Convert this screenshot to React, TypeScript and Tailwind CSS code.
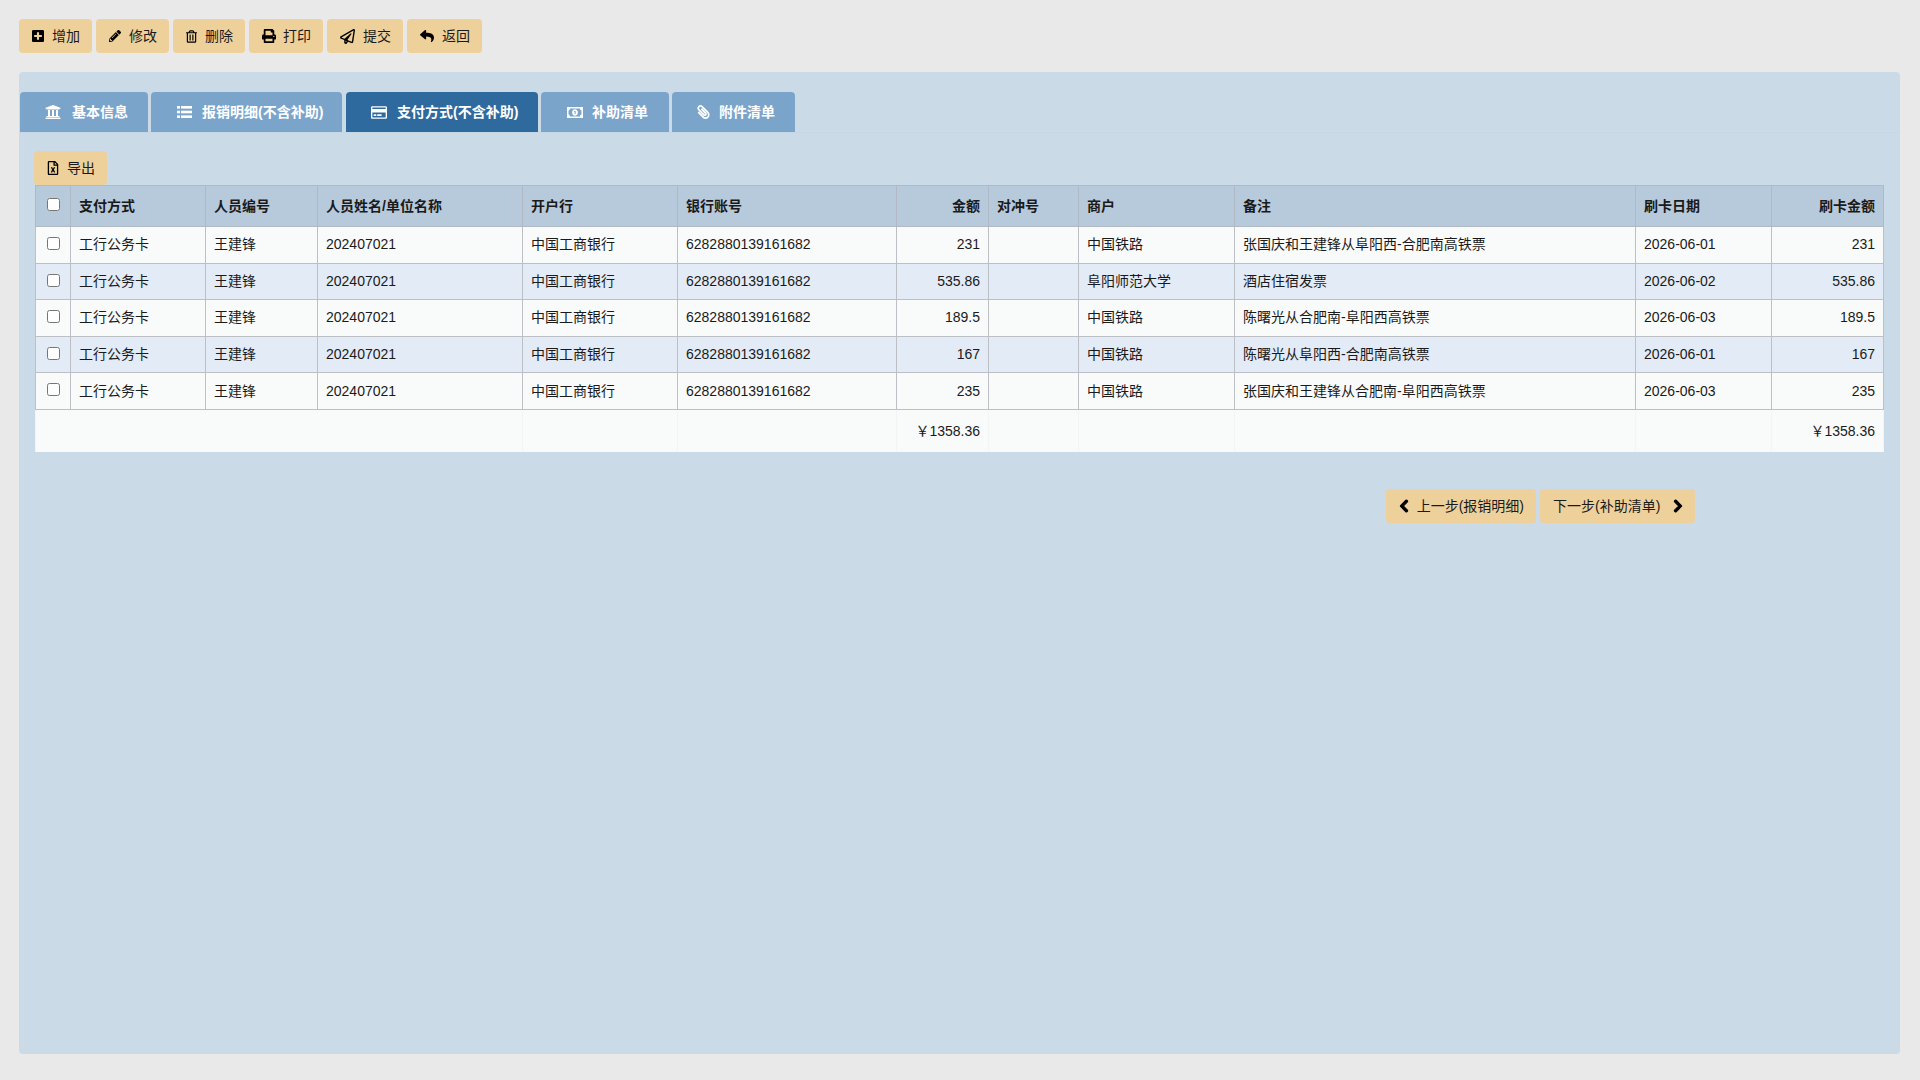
import type { ReactNode } from 'react';
import {
  FaChevronLeft,
  FaChevronRight,
  FaPaperclip,
  FaPencilAlt,
  FaPlusSquare,
  FaPrint,
  FaRegCreditCard,
  FaRegFileExcel,
  FaRegPaperPlane,
  FaRegTrashAlt,
  FaReply,
  FaUniversity,
} from 'react-icons/fa';

const rows = [
  { amount: '231', merchant: '中国铁路', note: '张国庆和王建锋从阜阳西-合肥南高铁票', date: '2026-06-01' },
  { amount: '535.86', merchant: '阜阳师范大学', note: '酒店住宿发票', date: '2026-06-02' },
  { amount: '189.5', merchant: '中国铁路', note: '陈曙光从合肥南-阜阳西高铁票', date: '2026-06-03' },
  { amount: '167', merchant: '中国铁路', note: '陈曙光从阜阳西-合肥南高铁票', date: '2026-06-01' },
  { amount: '235', merchant: '中国铁路', note: '张国庆和王建锋从合肥南-阜阳西高铁票', date: '2026-06-03' },
];

const colWidths = [
  'w-[35px]',
  'w-[135px]',
  'w-[112px]',
  'w-[205px]',
  'w-[155px]',
  'w-[219px]',
  'w-[92px]',
  'w-[90px]',
  'w-[156px]',
  'w-[401px]',
  'w-[136px]',
  'w-[112px]',
];

function ActionButton({ children, className = '' }: { children: ReactNode; className?: string }) {
  return (
    <button className={`flex h-[34px] items-center rounded-[4px] bg-[#eed09b] pl-[13px] pr-3 text-[14px] text-[#1a1a1a] ${className}`}>
      {children}
    </button>
  );
}

function Tab({ icon, label, active, className }: { icon: ReactNode; label: string; active?: boolean; className: string }) {
  return (
    <div
      className={`flex h-[40px] items-center rounded-t-[4px] text-[14px] font-bold text-white ${className} ${
        active ? 'bg-[#2f6a9e]' : 'bg-[#7ba4cb]'
      }`}
    >
      {icon}
      <span>{label}</span>
    </div>
  );
}

function ListIcon() {
  return (
    <svg viewBox="0 0 15 12" className="mr-[10px] h-[12px] w-[15px]" fill="currentColor">
      <rect x="0" y="0" width="3" height="2.6" />
      <rect x="4" y="0" width="11" height="2.6" />
      <rect x="0" y="4.7" width="3" height="2.6" />
      <rect x="4" y="4.7" width="11" height="2.6" />
      <rect x="0" y="9.4" width="3" height="2.6" />
      <rect x="4" y="9.4" width="11" height="2.6" />
    </svg>
  );
}

function MoneyIcon() {
  return (
    <svg viewBox="0 0 16 11" className="mr-[9px] h-[11px] w-[16px]" fill="currentColor" fillRule="evenodd">
      <path d="M0 0h16v11H0zM3 1.5C3 2.8 2.6 3.4 1.5 3.5v4c1.1.1 1.5.7 1.5 2h10c0-1.3.4-1.9 1.5-2v-4c-1.1-.1-1.5-.7-1.5-2z" />
      <path d="M8 2.2c1.7 0 2.9 1.5 2.9 3.3S9.7 8.8 8 8.8 5.1 7.3 5.1 5.5 6.3 2.2 8 2.2zM7 4v.8h.6V7h1V4z" />
    </svg>
  );
}

const th = 'border border-[#b1bac4] px-2 text-left font-bold';
const td = 'border border-[#bcc0c5] px-2 font-normal';
const foot = 'border-x border-[#f3f5f5] px-2';

export default function App() {
  return (
    <div
      className="min-h-[1080px] bg-[#e9e9e9] px-[19px] pt-[19px] text-[#1a1a1a]"
      style={{ fontFamily: '"Liberation Sans", "Noto Sans CJK SC", sans-serif' }}
    >
      {/* 顶部工具栏 */}
      <div className="flex gap-1">
        <ActionButton><FaPlusSquare className="mr-2 h-[14px] w-[12px] text-black" />增加</ActionButton>
        <ActionButton><FaPencilAlt className="mr-2 h-[12px] w-[12px] text-black" />修改</ActionButton>
        <ActionButton><FaRegTrashAlt className="mr-2 h-[13px] w-[11px] text-black" />删除</ActionButton>
        <ActionButton><FaPrint className="mr-[7px] h-[14px] w-[14px] text-black" />打印</ActionButton>
        <ActionButton><FaRegPaperPlane className="mr-2 h-[15px] w-[15px] text-black" />提交</ActionButton>
        <ActionButton><FaReply className="mr-2 h-[14px] w-[14px] text-black" />返回</ActionButton>
      </div>

      {/* 主面板 */}
      <div className="mt-[19px] h-[982px] w-[1881px] rounded-[4px] bg-[#cadbe7] pt-5">
        <div className="flex border-b border-[#c6d8e6] pl-px">
          <Tab className="w-[128px] pl-[25px]" icon={<FaUniversity className="mr-[11px] h-[16px] w-[16px]" />} label="基本信息" />
          <Tab className="ml-[3px] w-[191px] pl-[26px]" icon={<ListIcon />} label="报销明细(不含补助)" />
          <Tab className="ml-1 w-[192px] pl-[25px]" active icon={<FaRegCreditCard className="mr-[10px] h-[15px] w-[16px]" />} label="支付方式(不含补助)" />
          <Tab className="ml-[3px] w-[128px] pl-[26px]" icon={<MoneyIcon />} label="补助清单" />
          <Tab className="ml-[3px] w-[123px] pl-[25px]" icon={<FaPaperclip className="mr-[9px] h-[14px] w-[13px] -scale-x-100" />} label="附件清单" />
        </div>

        <div className="pl-[15px] pt-[18px]">
          <ActionButton><FaRegFileExcel className="mr-2 h-[14px] w-[12px] text-black" />导出</ActionButton>
          <table className="ml-px w-[1848px] table-fixed border-collapse text-[14px]">
            <colgroup>
              {colWidths.map((w, i) => (
                <col key={i} className={w} />
              ))}
            </colgroup>
            <thead>
              <tr className="h-[41px] bg-[#b7cadc]">
                <th className={`${th} !px-0 !text-center`}><input type="checkbox" className="mb-1 align-middle" /></th>
                <th className={th}>支付方式</th>
                <th className={th}>人员编号</th>
                <th className={th}>人员姓名/单位名称</th>
                <th className={th}>开户行</th>
                <th className={th}>银行账号</th>
                <th className={`${th} !text-right`}>金额</th>
                <th className={th}>对冲号</th>
                <th className={th}>商户</th>
                <th className={th}>备注</th>
                <th className={th}>刷卡日期</th>
                <th className={`${th} !text-right`}>刷卡金额</th>
              </tr>
            </thead>
            <tbody>
              {rows.map((r, i) => (
                <tr key={i} className={`h-[36.6px] ${i % 2 ? 'bg-[#e2ebf6]' : 'bg-[#f9fafa]'}`}>
                  <td className={`${td} !px-0 text-center`}><input type="checkbox" className="mb-1 align-middle" /></td>
                  <td className={td}>工行公务卡</td>
                  <td className={td}>王建锋</td>
                  <td className={td}>202407021</td>
                  <td className={td}>中国工商银行</td>
                  <td className={td}>6282880139161682</td>
                  <td className={`${td} text-right`}>{r.amount}</td>
                  <td className={td}></td>
                  <td className={td}>{r.merchant}</td>
                  <td className={td}>{r.note}</td>
                  <td className={td}>{r.date}</td>
                  <td className={`${td} text-right`}>{r.amount}</td>
                </tr>
              ))}
            </tbody>
            <tfoot>
              <tr className="h-[43px] bg-[#f9fafa]">
                <td colSpan={4} className={foot}></td>
                <td className={foot}></td>
                <td className={foot}></td>
                <td className={`${foot} text-right`}>￥1358.36</td>
                <td className={foot}></td>
                <td className={foot}></td>
                <td className={foot}></td>
                <td className={foot}></td>
                <td className={`${foot} text-right`}>￥1358.36</td>
              </tr>
            </tfoot>
          </table>
        </div>

        {/* 上一步 / 下一步 */}
        <div className="mt-[37px] flex justify-end gap-1 pr-[205px]">
          <ActionButton className="w-[150px] justify-between"><FaChevronLeft className="h-[14px] w-[10px] stroke-[40] text-black" stroke="currentColor" />上一步(报销明细)</ActionButton>
          <ActionButton className="w-[155px] justify-between">下一步(补助清单)<FaChevronRight className="h-[14px] w-[10px] stroke-[40] text-black" stroke="currentColor" /></ActionButton>
        </div>
      </div>
    </div>
  );
}
